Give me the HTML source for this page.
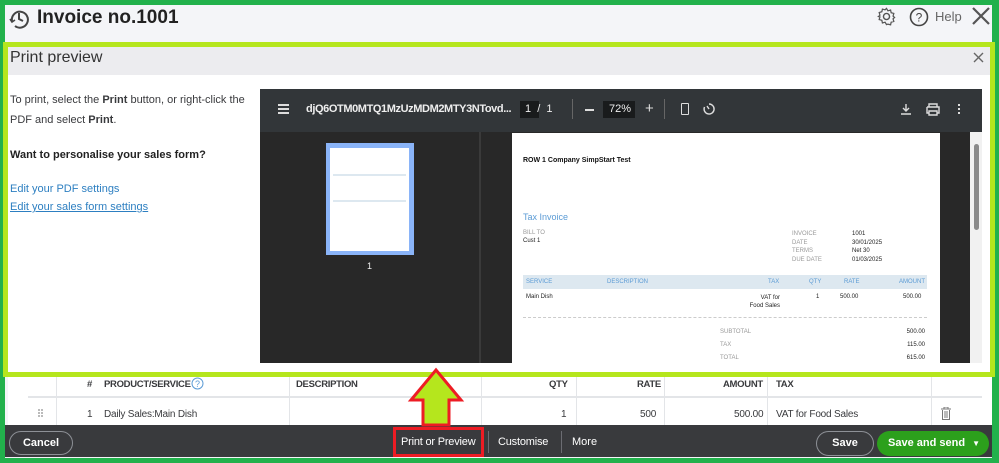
<!DOCTYPE html>
<html><head><meta charset="utf-8"><style>
*{margin:0;padding:0;box-sizing:border-box}
body{width:999px;height:463px;overflow:hidden;background:#22b14c;font-family:"Liberation Sans",sans-serif;position:relative}
.a{position:absolute}
.t{white-space:nowrap}
</style></head><body>
<div class="a" style="left:5px;top:5px;width:987px;height:453px;background:#f4f5f8"></div>
<!-- header -->
<svg class="a" style="left:8px;top:7px" width="22" height="22" viewBox="0 0 22 22"><path d="M4 14a8 8 0 1 1 3 5" fill="none" stroke="#444" stroke-width="2"/><path d="M11 6v6l4 2" fill="none" stroke="#444" stroke-width="2"/><path d="M2 12l2 3 3-2" fill="none" stroke="#444" stroke-width="1.6"/></svg>
<div class="a t" style="left:37px;top:7px;font-size:19px;font-weight:bold;color:#222">Invoice no.1001</div>
<svg class="a" style="left:877px;top:7px" width="19" height="19" viewBox="0 0 20 20"><circle cx="10" cy="10" r="3.2" fill="none" stroke="#555" stroke-width="1.5"/><path d="M10 1.5l1.5 2.5 2.8-.8.6 2.8 2.8.8-.8 2.8 1.6 1.4-1.6 1.4.8 2.8-2.8.8-.6 2.8-2.8-.8L10 18.5l-1.5-2.5-2.8.8-.6-2.8-2.8-.8.8-2.8L1.5 10l1.6-1.4-.8-2.8 2.8-.8.6-2.8 2.8.8z" fill="none" stroke="#555" stroke-width="1.3"/></svg>
<svg class="a" style="left:909px;top:7px" width="20" height="20" viewBox="0 0 20 20"><circle cx="10" cy="10" r="8.5" fill="none" stroke="#444" stroke-width="1.6"/><text x="10" y="14.5" font-size="12" text-anchor="middle" fill="#444" font-family="Liberation Sans">?</text></svg>
<div class="a t" style="left:935px;top:9px;font-size:13px;color:#666">Help</div>
<svg class="a" style="left:972px;top:7px" width="18" height="18" viewBox="0 0 18 18"><path d="M1 1L17 17M17 1L1 17" stroke="#555" stroke-width="2.2"/></svg>
<!-- lime frame -->
<div class="a" style="left:3px;top:42px;width:992px;height:335px;border:5px solid #b5e61d;background:#fff"></div>
<div class="a" style="left:8px;top:47px;width:982px;height:28px;background:#ececef"></div>
<div class="a t" style="left:10px;top:49px;font-size:16px;color:#333">Print preview</div>
<svg class="a" style="left:973px;top:52px" width="11" height="11" viewBox="0 0 11 11"><path d="M1 1L10 10M10 1L1 10" stroke="#666" stroke-width="1.4"/></svg>
<div class="a" style="left:10px;top:90px;width:240px;font-size:11px;line-height:20px;color:#393a3d">To print, select the <b>Print</b> button, or right-click the PDF and select <b>Print</b>.</div>
<div class="a t" style="left:10px;top:149px;font-size:11px;font-weight:bold;color:#222">Want to personalise your sales form?</div>
<div class="a t" style="left:10px;top:183px;font-size:11px;color:#2d7fc1">Edit your PDF settings</div>
<div class="a t" style="left:10px;top:201px;font-size:11px;color:#2d7fc1;text-decoration:underline">Edit your sales form settings</div>
<!-- pdf viewer -->
<div class="a" style="left:260px;top:89px;width:722px;height:274px;background:#282828"></div>
<div class="a" style="left:260px;top:89px;width:722px;height:43px;background:#323639"></div>
<div class="a" style="left:278px;top:104px;width:11px;height:2px;background:#ddd;box-shadow:0 4px 0 #ddd,0 8px 0 #ddd"></div>
<div class="a t" style="left:306px;top:103px;font-size:11px;color:#eee;font-weight:bold;letter-spacing:-.4px">djQ6OTM0MTQ1MzUzMDM2MTY3NTovd...</div>
<div class="a" style="left:520px;top:101px;width:19px;height:17px;background:#191b1c"></div>
<div class="a t" style="left:525px;top:103px;font-size:11px;color:#eee">1 &nbsp;/ &nbsp;1</div>
<div class="a" style="left:572px;top:99px;width:1px;height:20px;background:#666"></div>
<div class="a" style="left:585px;top:109px;width:9px;height:1.5px;background:#ddd"></div>
<div class="a" style="left:603px;top:101px;width:32px;height:17px;background:#191b1c"></div>
<div class="a t" style="left:609px;top:103px;font-size:11px;color:#eee">72%</div>
<div class="a t" style="left:645px;top:100px;font-size:15px;color:#ddd">+</div>
<div class="a" style="left:664px;top:99px;width:1px;height:20px;background:#666"></div>
<div class="a" style="left:681px;top:103px;width:8px;height:12px;border:1.5px solid #ddd;border-radius:1px"></div>
<svg class="a" style="left:702px;top:102px" width="14" height="14" viewBox="0 0 14 14"><path d="M7 2a5 5 0 1 1-4.5 3" fill="none" stroke="#ddd" stroke-width="1.4"/><path d="M5 4L7 7" stroke="#ddd" stroke-width="1.4"/></svg>
<svg class="a" style="left:900px;top:103px" width="12" height="12" viewBox="0 0 12 12"><path d="M6 1v7M3 5l3 3 3-3M1 11h10" fill="none" stroke="#ddd" stroke-width="1.4"/></svg>
<svg class="a" style="left:926px;top:103px" width="14" height="13" viewBox="0 0 14 13"><path d="M3 4V1h8v3M1 4h12v6h-2M3 10H1V4M3 8h8v4H3z" fill="none" stroke="#ddd" stroke-width="1.4"/></svg>
<div class="a" style="left:958px;top:104px;width:2px;height:2px;background:#ddd;box-shadow:0 4px 0 #ddd,0 8px 0 #ddd"></div>
<div class="a" style="left:479px;top:132px;width:2px;height:231px;background:#3a3a3a"></div>
<!-- thumbnail -->
<div class="a" style="left:326px;top:143px;width:88px;height:112px;background:#8ab4f8"></div>
<div class="a" style="left:330px;top:148px;width:79px;height:103px;background:#fff"></div>
<div class="a" style="left:333px;top:174px;width:73px;height:2px;background:#dde8f0"></div>
<div class="a" style="left:333px;top:200px;width:73px;height:2px;background:#dde8f0"></div>
<div class="a t" style="left:367px;top:261px;font-size:9px;color:#eee">1</div>
<!-- page -->
<div class="a" style="left:512px;top:133px;width:428px;height:230px;background:#fff;font-size:6px;color:#555">
<div class="a t" style="left:11px;top:24px;font-size:7px;font-weight:bold;color:#111">ROW 1 Company SimpStart Test</div>
<div class="a t" style="left:11px;top:79px;font-size:9px;color:#5b9bd5">Tax Invoice</div>
<div class="a t" style="left:11px;top:97px;color:#999">BILL TO</div>
<div class="a t" style="left:11px;top:105px;color:#222">Cust 1</div>
<div class="a" style="left:280px;top:97px;line-height:8.7px;color:#999">INVOICE<br>DATE<br>TERMS<br>DUE DATE</div>
<div class="a" style="left:340px;top:97px;line-height:8.7px;color:#222">1001<br>30/01/2025<br>Net 30<br>01/03/2025</div>
<div class="a" style="left:11px;top:142px;width:404px;height:14px;background:#dde8f0"></div>
<div class="a t" style="left:14px;top:146px;color:#5b9bd5">SERVICE</div>
<div class="a t" style="left:95px;top:146px;color:#5b9bd5">DESCRIPTION</div>
<div class="a t" style="left:256px;top:146px;color:#5b9bd5">TAX</div>
<div class="a t" style="left:297px;top:146px;color:#5b9bd5">QTY</div>
<div class="a t" style="left:332px;top:146px;color:#5b9bd5">RATE</div>
<div class="a t" style="left:387px;top:146px;color:#5b9bd5">AMOUNT</div>
<div class="a t" style="left:14px;top:161px;color:#222">Main Dish</div>
<div class="a" style="left:230px;top:161px;width:38px;text-align:right;line-height:8px;color:#222">VAT for<br>Food Sales</div>
<div class="a t" style="left:304px;top:161px;color:#222">1</div>
<div class="a t" style="left:328px;top:161px;color:#222">500.00</div>
<div class="a t" style="left:391px;top:161px;color:#222">500.00</div>
<div class="a" style="left:11px;top:184px;width:404px;border-top:1px dashed #ccc"></div>
<div class="a" style="left:208px;top:193px;line-height:13px;color:#999">SUBTOTAL<br>TAX<br>TOTAL</div>
<div class="a" style="left:380px;top:193px;width:33px;text-align:right;line-height:13px;color:#222">500.00<br>115.00<br>615.00</div>
</div>
<div class="a" style="left:970px;top:132px;width:12px;height:231px;background:#f1f1f1"></div>
<div class="a" style="left:974px;top:144px;width:5px;height:86px;background:#8a8a8a;border-radius:3px"></div>
<!-- table -->
<div class="a" style="left:8px;top:377px;width:984px;height:48px;background:#fff"></div>
<div class="a" style="left:28px;top:396px;width:954px;height:2px;background:#e3e5e8"></div>
<div style="font-size:9.5px;font-weight:bold;color:#393a3d;letter-spacing:-.3px">
<div class="a t" style="left:87px;top:379px">#</div>
<div class="a t" style="left:104px;top:379px">PRODUCT/SERVICE</div>
<div class="a t" style="left:296px;top:379px">DESCRIPTION</div>
<div class="a t" style="left:549px;top:379px">QTY</div>
<div class="a t" style="left:637px;top:379px">RATE</div>
<div class="a t" style="left:723px;top:379px">AMOUNT</div>
<div class="a t" style="left:776px;top:379px">TAX</div>
</div>
<svg class="a" style="left:191px;top:377px" width="13" height="13" viewBox="0 0 13 13"><circle cx="6.5" cy="6.5" r="5.5" fill="none" stroke="#5b9bd5"/><text x="6.5" y="10" font-size="9" text-anchor="middle" fill="#5b9bd5" font-family="Liberation Sans">?</text></svg>
<div style="font-size:10px;color:#393a3d;letter-spacing:-.2px">
<div class="a t" style="left:87px;top:409px">1</div>
<div class="a t" style="left:104px;top:409px">Daily Sales:Main Dish</div>
<div class="a t" style="left:561px;top:409px">1</div>
<div class="a t" style="left:640px;top:409px">500</div>
<div class="a t" style="left:734px;top:409px">500.00</div>
<div class="a t" style="left:776px;top:409px">VAT for Food Sales</div>
</div>
<div class="a" style="left:38px;top:409px;width:2px;height:2px;background:#bbb;box-shadow:3px 0 #bbb,0 3px #bbb,3px 3px #bbb,0 6px #bbb,3px 6px #bbb"></div>
<div class="a" style="left:56px;top:377px;width:1px;height:48px;background:#e3e5e8"></div>
<div class="a" style="left:289px;top:377px;width:1px;height:48px;background:#e3e5e8"></div>
<div class="a" style="left:481px;top:377px;width:1px;height:48px;background:#e3e5e8"></div>
<div class="a" style="left:576px;top:377px;width:1px;height:48px;background:#e3e5e8"></div>
<div class="a" style="left:664px;top:377px;width:1px;height:48px;background:#e3e5e8"></div>
<div class="a" style="left:767px;top:377px;width:1px;height:48px;background:#e3e5e8"></div>
<div class="a" style="left:931px;top:377px;width:1px;height:48px;background:#e3e5e8"></div>
<svg class="a" style="left:941px;top:407px" width="10" height="13" viewBox="0 0 10 13"><path d="M0 2h10M3 2V0h4v2M1.5 3v9.5h7V3M4 4v7M6 4v7" fill="none" stroke="#777" stroke-width="1"/></svg>
<!-- footer -->
<div class="a" style="left:5px;top:425px;width:987px;height:32px;background:#393a3d"></div>
<div class="a t" style="left:9px;top:431px;width:64px;height:24px;border:1px solid #8d9096;border-radius:12px;color:#fff;font-size:11px;text-align:center;line-height:22px;font-weight:bold">Cancel</div>
<div class="a t" style="left:401px;top:436px;font-size:11px;color:#fff;letter-spacing:-.2px">Print or Preview</div>
<div class="a" style="left:488px;top:431px;width:1px;height:22px;background:#6b6c72"></div>
<div class="a t" style="left:498px;top:436px;font-size:11px;color:#fff;letter-spacing:-.2px">Customise</div>
<div class="a" style="left:561px;top:431px;width:1px;height:22px;background:#6b6c72"></div>
<div class="a t" style="left:572px;top:436px;font-size:11px;color:#fff">More</div>
<div class="a t" style="left:816px;top:431px;width:58px;height:25px;border:1px solid #8d9096;border-radius:13px;color:#fff;font-size:11px;text-align:center;line-height:23px;font-weight:bold">Save</div>
<div class="a t" style="left:877px;top:431px;width:112px;height:25px;background:#2ca01c;border-radius:13px;color:#fff;font-size:11px;line-height:25px;padding-left:11px;font-weight:bold">Save and send<span style="position:absolute;right:9px;font-size:8px">▼</span></div>
<!-- red annotations -->
<svg class="a" style="left:0;top:0" width="999" height="463">
<path d="M436 370L461 400H449V425H423V400H411Z" fill="#b5e61d" stroke="#ed1c24" stroke-width="3" stroke-linejoin="miter"/>
<rect x="394.5" y="428.5" width="88" height="27" fill="none" stroke="#ed1c24" stroke-width="3"/>
</svg>
</body></html>
